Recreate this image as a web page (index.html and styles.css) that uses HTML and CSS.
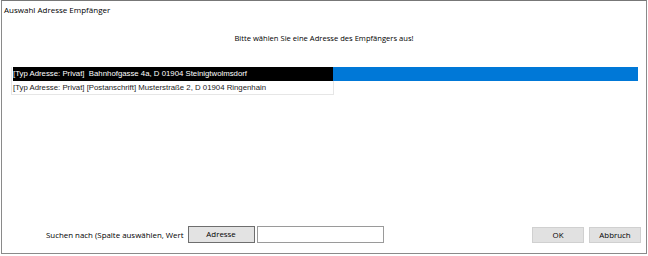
FILE: index.html
```html
<!DOCTYPE html>
<html lang="de">
<head>
    <meta charset="UTF-8">
    <title>Auswahl Adresse Empfänger</title>
    <link rel="stylesheet" href="styles.css">
</head>
<body>
    <div class="dialog">
        <div class="title">Auswahl Adresse Empfänger</div>
        <div class="prompt">Bitte wählen Sie eine Adresse des Empfängers aus!</div>

        <div class="list-area">
            <div class="list-box">
                <div class="row selected">[Typ Adresse: Privat]&nbsp; Bahnhofgasse 4a, D 01904 Steinigtwolmsdorf</div>
                <div class="row">[Typ Adresse: Privat] [Postanschrift] Musterstraße 2, D 01904 Ringenhain</div>
            </div>
            <div class="highlight"></div>
        </div>

        <div class="footer">
            <span class="search-label">Suchen nach (Spalte auswählen, Wert</span>
            <button class="column-btn">Adresse</button>
            <input class="search-input" type="text">
            <div class="actions">
                <button class="btn">OK</button>
                <button class="btn">Abbruch</button>
            </div>
        </div>
    </div>
</body>
</html>
```

FILE: styles.css
```css
body {
    margin: 0;
    padding: 0;
    background: #ffffff;
    font-family: "Open Sans", "Noto Sans", sans-serif;
}

.dialog {
    position: relative;
    box-sizing: border-box;
    width: 646px;
    height: 254px;
    margin-left: 1px;
    border: 1px solid #8a8a8a;
    border-top-color: #777777;
    background: #ffffff;
    display: flex;
    flex-direction: column;
}

.title {
    font-size: 8px;
    color: #000000;
    padding: 3px 0 0 2px;
    height: 17px;
}

.prompt {
    text-align: center;
    font-size: 7.6px;
    color: #000000;
    margin-top: 12px;
    height: 16px;
}

.list-area {
    position: relative;
    margin: 18px 0 0 9px;
    width: 627px;
}

.list-box {
    box-sizing: border-box;
    width: 323px;
    border: 1px solid #e6e6e6;
    border-top: none;
    font-family: "Liberation Sans", Arial, sans-serif;
    font-size: 7.8px;
}

.row {
    height: 13px;
    line-height: 13px;
    padding-left: 1px;
    color: #222222;
    white-space: nowrap;
}

.row.selected {
    position: relative;
    z-index: 1;
    background: #000000;
    color: #ffffff;
    height: 14px;
    line-height: 14px;
    margin-left: 1px;
    padding-left: 0;
}

.highlight {
    position: absolute;
    top: 0;
    left: 322px;
    width: 305px;
    height: 14px;
    background: #0078d7;
}

.footer {
    display: flex;
    align-items: center;
    margin-top: auto;
    margin-bottom: 10px;
    padding-left: 44px;
    font-size: 7.9px;
    color: #000000;
}

.search-label {
    margin-right: 4px;
}

.column-btn {
    box-sizing: border-box;
    width: 67px;
    height: 17px;
    margin: 0;
    padding: 0 0 2px;
    border: 1px solid #6e6e6e;
    background: #e3e3e3;
    font-family: inherit;
    font-size: 7.9px;
    color: #000000;
}

.search-input {
    box-sizing: border-box;
    width: 127px;
    height: 17px;
    margin: 0 0 0 2px;
    border: 1px solid #9a9a9a;
    background: #ffffff;
}

.actions {
    display: flex;
    gap: 5px;
    margin-left: auto;
    margin-right: 5px;
}

.btn {
    box-sizing: border-box;
    width: 52px;
    height: 16px;
    margin: 0;
    padding: 0;
    border: 1px solid #d0d0d0;
    background: #e1e1e1;
    font-family: inherit;
    font-size: 7.9px;
    color: #000000;
}
```
